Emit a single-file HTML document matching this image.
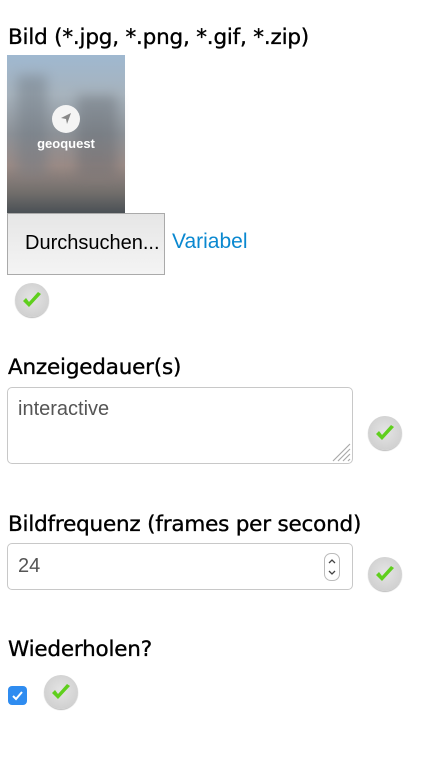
<!DOCTYPE html>
<html><head><meta charset="utf-8"><style>
body{margin:0;width:428px;height:770px;background:#fff;position:relative;font-family:"DejaVu Sans","Liberation Sans",sans-serif;overflow:hidden}
.a{position:absolute}
.lbl{font-size:21.5px;color:#000;letter-spacing:-0.2px;-webkit-text-stroke:0.35px #000;white-space:nowrap}
.ok{position:absolute;width:34px;height:34px;border-radius:50%;background:radial-gradient(circle at 50% 45%,#e4e4e4,#c9c9c9);box-shadow:0 1px 1px #bbb}
.ok svg{position:absolute;left:7px;top:8px}
.inp{position:absolute;border:1px solid #c8c8c8;border-radius:5px;background:#fff;font-family:"Liberation Sans",sans-serif;font-size:20px;color:#555}
</style></head><body>
<div class="a lbl" style="left:8px;top:25px">Bild (*.jpg, *.png, *.gif, *.zip)</div>
<div class="a" style="left:7px;top:55px;width:118px;height:158px;background:linear-gradient(180deg,#9fb8d0 0%,#a7b3bd 25%,#8d9298 50%,#9a8a85 70%,#6f6c6a 88%,#4a5055 100%)">
<div class="a" style="left:10px;top:20px;width:30px;height:100px;background:#6c7680;opacity:.45;filter:blur(6px)"></div>
<div class="a" style="left:70px;top:40px;width:40px;height:80px;background:#5e646b;opacity:.4;filter:blur(6px)"></div>
<div class="a" style="left:45px;top:50px;width:28px;height:28px;border-radius:50%;background:#f4f4f4"><svg width="28" height="28"><path d="M19 8 L9 13 L14 14 L15 19 Z" fill="#888"/></svg></div>
<div class="a" style="left:0;width:118px;top:81px;text-align:center;color:#fff;font:bold 13px 'Liberation Sans',sans-serif">geoquest</div>
</div>
<div class="a" style="left:7px;top:213px;width:156px;height:60px;border:1px solid #aaa;background:linear-gradient(#e6e6e6,#f4f4f4);overflow:hidden"><div class="a" style="left:17px;top:18px;font:20px 'Liberation Sans',sans-serif;color:#000;white-space:nowrap">Durchsuchen...</div></div>
<div class="a" style="left:172px;top:230px;font:21px 'Liberation Sans',sans-serif;color:#0a88d0">Variabel</div>
<div class="ok" style="left:15px;top:283px"><svg width="20" height="18"><path d="M1 10 L7 16 L19 3 L16 1 L7 11 L4 7 Z" fill="#5fcf1d"/></svg></div>
<div class="a lbl" style="left:8px;top:355px">Anzeigedauer(s)</div>
<div class="inp" style="left:7px;top:387px;width:344px;height:75px"><div class="a" style="left:10px;top:10px">interactive</div>
<svg class="a" style="right:1px;bottom:1px" width="22" height="22"><path d="M21 4 L4 21 M21 9 L9 21 M21 14 L14 21 M21 19 L19 21" stroke="#aaa" stroke-width="1.2"/></svg></div>
<div class="ok" style="left:368px;top:416px"><svg width="20" height="18"><path d="M1 10 L7 16 L19 3 L16 1 L7 11 L4 7 Z" fill="#5fcf1d"/></svg></div>
<div class="a lbl" style="left:8px;top:512px">Bildfrequenz (frames per second)</div>
<div class="inp" style="left:7px;top:543px;width:344px;height:45px"><div class="a" style="left:10px;top:11px">24</div>
<div class="a" style="left:316px;top:9px;width:14px;height:26px;border:1px solid #bbb;border-radius:7px"><svg width="14" height="26"><path d="M4 9 L7 6 L10 9 M4 17 L7 20 L10 17" stroke="#444" fill="none" stroke-width="1.3"/></svg></div></div>
<div class="ok" style="left:368px;top:557px"><svg width="20" height="18"><path d="M1 10 L7 16 L19 3 L16 1 L7 11 L4 7 Z" fill="#5fcf1d"/></svg></div>
<div class="a lbl" style="left:8px;top:637px">Wiederholen?</div>
<div class="a" style="left:8px;top:686px;width:19px;height:19px;border-radius:4px;background:#2f8cf0"><svg width="19" height="19"><path d="M5 10 L8 13 L14 6" stroke="#fff" stroke-width="2" fill="none"/></svg></div>
<div class="ok" style="left:44px;top:675px"><svg width="20" height="18"><path d="M1 10 L7 16 L19 3 L16 1 L7 11 L4 7 Z" fill="#5fcf1d"/></svg></div>
</body></html>
